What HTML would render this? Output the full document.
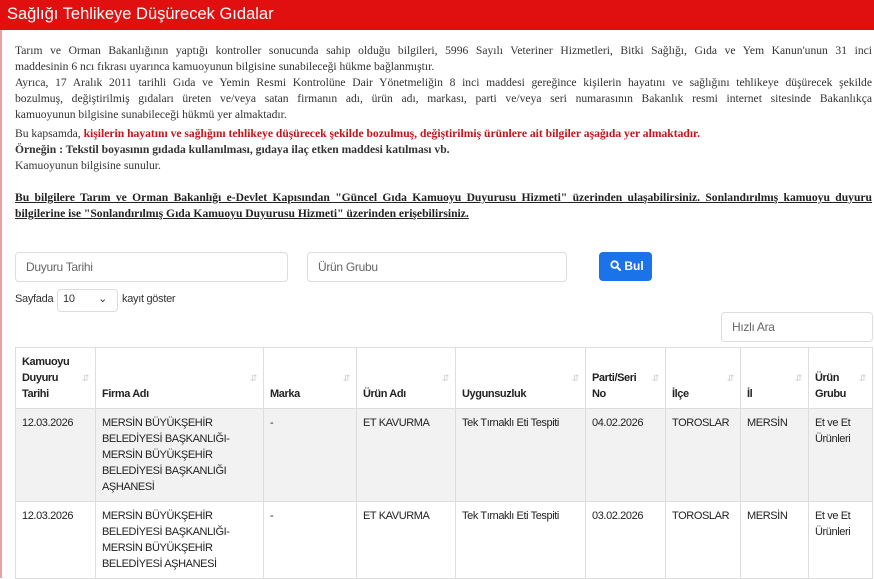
<!DOCTYPE html><html><head><meta charset="utf-8"><style>
*{margin:0;padding:0;box-sizing:border-box}
body{width:874px;height:578px;overflow:hidden;background:#fff;position:relative;font-family:"Liberation Sans Narrow","Liberation Sans",sans-serif;color:#222}
.bar{position:absolute;left:0;top:0;width:874px;height:30px;background:#e01010;color:#fff;font-family:"Liberation Sans",sans-serif;font-size:16.5px;padding:5px 0 0 7px}
.lb{position:absolute;left:0;top:30px;width:2px;height:548px;background:#e8a0a0}
.txt{position:absolute;left:15px;top:43px;width:857px;font-family:"Liberation Serif",serif;font-size:11.6px;line-height:16px;color:#333;white-space:nowrap}
.j{text-align:justify;text-align-last:justify}
.red{color:#c0161b;font-weight:bold}
.u{font-weight:bold;text-decoration:underline;color:#222}
.in{position:absolute;height:30px;border:1px solid #ddd;border-radius:4px;font-size:12px;color:#666;padding:7px 10px;letter-spacing:-0.3px}
.btn{position:absolute;left:599px;top:252px;width:53px;height:29px;background:#1a73e8;border-radius:4px;color:#fff;font-size:12px;font-weight:bold;padding:7px 0 0 11px}
table{position:absolute;left:15px;top:347px;width:858px;border-collapse:collapse;font-size:11px;letter-spacing:-0.4px}
td,th{border:1px solid #ddd;vertical-align:top;text-align:left;padding:6px 6px;line-height:16px}
th{vertical-align:bottom;font-weight:bold;height:60px;padding-bottom:6px;position:relative}
th:after{content:"⇵";position:absolute;right:6px;top:22px;color:#ccc;font-size:9px;font-weight:normal}
tr.g td{background:#f2f2f2}
</style></head><body>
<div class="bar">Sağlığı Tehlikeye Düşürecek Gıdalar</div>
<div class="lb"></div>
<div class="txt">
<div class="j">Tarım ve Orman Bakanlığının yaptığı kontroller sonucunda sahip olduğu bilgileri, 5996 Sayılı Veteriner Hizmetleri, Bitki Sağlığı, Gıda ve Yem Kanun'unun 31 inci</div>
<div>maddesinin 6 ncı fıkrası uyarınca kamuoyunun bilgisine sunabileceği hükme bağlanmıştır.</div>
<div class="j">Ayrıca, 17 Aralık 2011 tarihli Gıda ve Yemin Resmi Kontrolüne Dair Yönetmeliğin 8 inci maddesi gereğince kişilerin hayatını ve sağlığını tehlikeye düşürecek şekilde</div>
<div class="j">bozulmuş, değiştirilmiş gıdaları üreten ve/veya satan firmanın adı, ürün adı, markası, parti ve/veya seri numarasının Bakanlık resmi internet sitesinde Bakanlıkça</div>
<div>kamuoyunun bilgisine sunabileceği hükmü yer almaktadır.</div>
<div style="margin-top:3px">Bu kapsamda, <span class="red">kişilerin hayatını ve sağlığını tehlikeye düşürecek şekilde bozulmuş, değiştirilmiş ürünlere ait bilgiler aşağıda yer almaktadır.</span></div>
<div><b>Örneğin : Tekstil boyasının gıdada kullanılması, gıdaya ilaç etken maddesi katılması vb.</b></div>
<div>Kamuoyunun bilgisine sunulur.</div>
<div class="u j" style="margin-top:16px">Bu bilgilere Tarım ve Orman Bakanlığı e-Devlet Kapısından "Güncel Gıda Kamuoyu Duyurusu Hizmeti" üzerinden ulaşabilirsiniz. Sonlandırılmış kamuoyu duyuru</div>
<div class="u">bilgilerine ise "Sonlandırılmış Gıda Kamuoyu Duyurusu Hizmeti" üzerinden erişebilirsiniz.</div>
</div>
<div class="in" style="left:15px;top:252px;width:273px">Duyuru Tarihi</div>
<div class="in" style="left:307px;top:252px;width:260px">Ürün Grubu</div>
<div class="btn"><svg width="11" height="11" viewBox="0 0 12 12" style="vertical-align:-1px"><circle cx="5" cy="5" r="3.6" fill="none" stroke="#fff" stroke-width="2"/><path d="M7.7 7.7L11 11" stroke="#fff" stroke-width="2.2" stroke-linecap="round"/></svg> Bul</div>
<div style="position:absolute;left:15px;top:293px;font-size:11px;color:#333;letter-spacing:-0.3px">Sayfada</div>
<div class="in" style="left:57px;top:289px;width:61px;height:23px;padding:3px 5px;font-size:11px;color:#333">10 <span style="position:absolute;right:10px;top:2px">⌄</span></div>
<div style="position:absolute;left:122px;top:293px;font-size:11px;color:#333;letter-spacing:-0.3px">kayıt göster</div>
<div class="in" style="left:721px;top:312px;width:152px;height:30px">Hızlı Ara</div>
<table>
<tr><th style="width:80px">Kamuoyu<br>Duyuru<br>Tarihi</th><th style="width:168px">Firma Adı</th><th style="width:93px">Marka</th><th style="width:99px">Ürün Adı</th><th style="width:130px">Uygunsuzluk</th><th style="width:80px">Parti/Seri<br>No</th><th style="width:75px">İlçe</th><th style="width:68px">İl</th><th>Ürün<br>Grubu</th></tr>
<tr class="g"><td>12.03.2026</td><td>MERSİN BÜYÜKŞEHİR BELEDİYESİ BAŞKANLIĞI-MERSİN BÜYÜKŞEHİR BELEDİYESİ BAŞKANLIĞI AŞHANESİ</td><td>-</td><td>ET KAVURMA</td><td>Tek Tırnaklı Eti Tespiti</td><td>04.02.2026</td><td>TOROSLAR</td><td>MERSİN</td><td>Et ve Et Ürünleri</td></tr>
<tr><td>12.03.2026</td><td>MERSİN BÜYÜKŞEHİR BELEDİYESİ BAŞKANLIĞI-MERSİN BÜYÜKŞEHİR BELEDİYESİ AŞHANESİ</td><td>-</td><td>ET KAVURMA</td><td>Tek Tırnaklı Eti Tespiti</td><td>03.02.2026</td><td>TOROSLAR</td><td>MERSİN</td><td>Et ve Et Ürünleri</td></tr>
</table>
</body></html>
